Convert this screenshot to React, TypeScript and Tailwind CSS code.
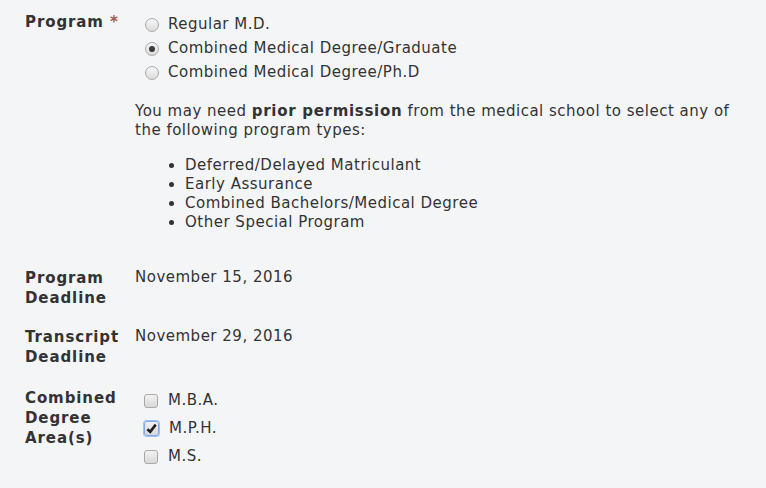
import type { ReactNode } from "react"

const programs = [
  { label: "Regular M.D.", checked: false },
  { label: "Combined Medical Degree/Graduate", checked: true },
  { label: "Combined Medical Degree/Ph.D", checked: false },
]

const permissionTypes = [
  "Deferred/Delayed Matriculant",
  "Early Assurance",
  "Combined Bachelors/Medical Degree",
  "Other Special Program",
]

const degreeAreas = [
  { label: "M.B.A.", checked: false },
  { label: "M.P.H.", checked: true },
  { label: "M.S.", checked: false },
]

const Radio = ({ checked }: { checked: boolean }) => (
  <span className="flex size-[14px] shrink-0 items-center justify-center rounded-full border border-[#a9a9a9] bg-gradient-to-b from-[#f6f6f6] to-[#dcdcdc]">
    {checked && <span className="size-[6px] rounded-full bg-[#3b3b3b]" />}
  </span>
)

const Checkbox = ({ checked }: { checked: boolean }) => (
  <span
    className={
      checked
        ? "flex size-[15px] shrink-0 items-center justify-center rounded-[3px] border border-[#7fa7e6] bg-gradient-to-b from-[#f2f2f2] to-[#d8d8d8] ring-1 ring-[#9ec0f5]"
        : "flex size-[14px] shrink-0 items-center justify-center rounded-[3px] border border-[#a9a9a9] bg-gradient-to-b from-[#f2f2f2] to-[#d8d8d8]"
    }
  >
    {checked && (
      <svg viewBox="0 0 12 12" className="size-[11px]">
        <path d="M1.5 6.8 L4.6 9.6 L10.6 1.8" fill="none" stroke="#1f1f1f" strokeWidth="2.8" />
      </svg>
    )}
  </span>
)

const Row = ({ label, children, className }: { label: ReactNode; children: ReactNode; className?: string }) => (
  <div className={`flex ${className ?? ""}`}>
    <div className="w-[110px] shrink-0 text-[15px] leading-[20px] font-bold tracking-[0.9px] text-[#333]">{label}</div>
    <div className="flex-1">{children}</div>
  </div>
)

export default function App() {
  return (
    <div
      className="min-h-[488px] w-[766px] bg-[#f4f5f7] pl-[25px] pt-[12px] text-[15px] leading-[19px] tracking-[0.5px] text-[#333]"
      style={{ fontFamily: '"DejaVu Sans", Verdana, sans-serif' }}
    >
      <Row
        label={
          <>
            Program <span className="text-[#a05a4a]">*</span>
          </>
        }
      >
        <div className="flex flex-col gap-[5px] pl-[10px] pt-[3px]">
          {programs.map(p => (
            <label key={p.label} className="flex items-center gap-[9px]">
              <Radio checked={p.checked} />
              {p.label}
            </label>
          ))}
        </div>

        <p className="mt-[20px] pr-[30px]">
          You may need <strong className="tracking-[0.7px]">prior permission</strong> from the medical school to
          select any of the following program types:
        </p>

        <ul className="mt-[16px] list-disc pl-[50px]">
          {permissionTypes.map(t => (
            <li key={t}>{t}</li>
          ))}
        </ul>
      </Row>

      <Row label="Program Deadline" className="mt-[36px]">
        November 15, 2016
      </Row>

      <Row label="Transcript Deadline" className="mt-[19px]">
        November 29, 2016
      </Row>

      <Row label="Combined Degree Area(s)" className="mt-[21px]">
        <div className="flex flex-col gap-[9px] pl-[9px] pt-[3px]">
          {degreeAreas.map(d => (
            <label key={d.label} className="flex items-center gap-[10px]">
              <Checkbox checked={d.checked} />
              {d.label}
            </label>
          ))}
        </div>
      </Row>
    </div>
  )
}
